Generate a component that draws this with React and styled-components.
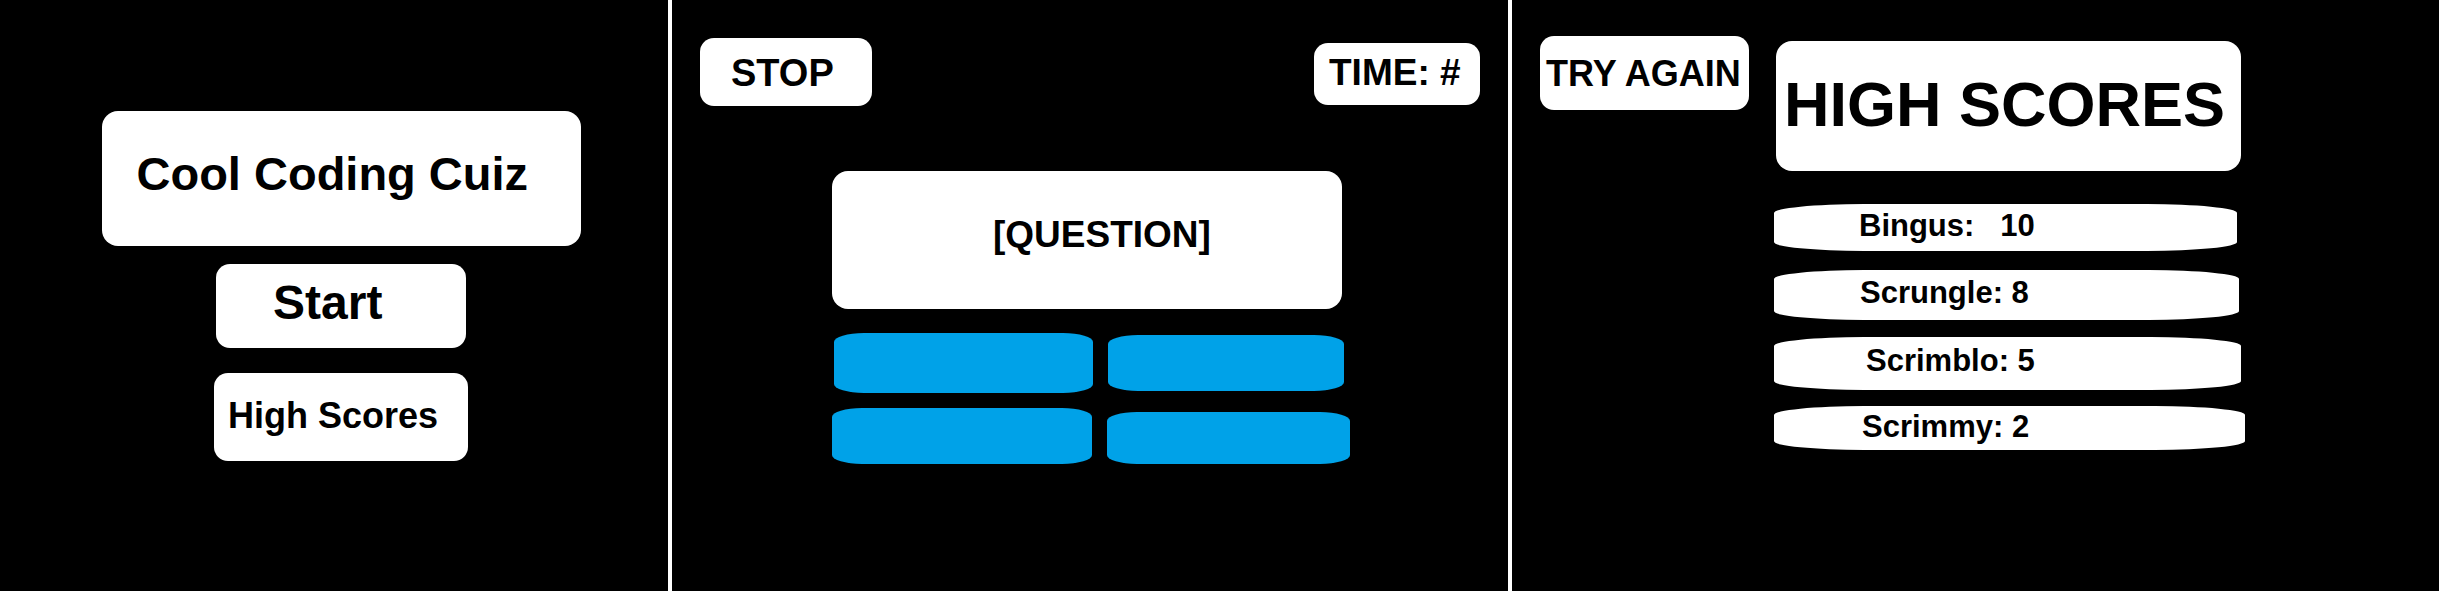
import React from "react";
import styled, { createGlobalStyle } from "styled-components";

const GlobalStyle = createGlobalStyle`
  html, body {
    margin: 0;
    padding: 0;
    background: #000;
  }
  body {
    font-family: "Liberation Sans", Arial, sans-serif;
    font-weight: bold;
    color: #000;
  }
`;

const Screens = styled.div`
  display: flex;
  width: 2439px;
  height: 591px;
  background: #000;
  overflow: hidden;
`;

const Panel = styled.section`
  box-sizing: border-box;
  width: ${(p) => p.$w}px;
  height: 100%;
  flex-shrink: 0;
  border-right: ${(p) => (p.$divider ? "4px solid #fff" : "none")};
  display: flex;
`;

const MenuColumn = styled.div`
  flex: 1;
  display: flex;
  flex-direction: column;
  align-items: center;
  padding: 111px 0 0 14px;
`;

const Card = styled.div`
  box-sizing: border-box;
  flex-shrink: 0;
  width: ${(p) => p.$w}px;
  height: ${(p) => p.$h}px;
  margin-top: ${(p) => p.$mt || 0}px;
  margin-left: ${(p) => p.$ml || 0}px;
  padding: ${(p) => p.$pt}px 0 0 ${(p) => p.$pl}px;
  background: #fff;
  border-radius: ${(p) => p.$r || 14}px;
  font-size: ${(p) => p.$size}px;
  line-height: 1;
  white-space: pre;
`;

const GameColumn = styled.div`
  flex: 1;
  display: flex;
  flex-direction: column;
  align-items: flex-start;
  padding: 38px 28px 0;
`;

const TopBar = styled.div`
  align-self: stretch;
  display: flex;
  justify-content: space-between;
  align-items: flex-start;
`;

const AnswerRow = styled.div`
  display: flex;
  align-items: flex-start;
  gap: 15px;
  margin-top: ${(p) => p.$mt}px;
  margin-left: 132px;
`;

const Answer = styled.button`
  flex-shrink: 0;
  width: ${(p) => p.$w}px;
  height: ${(p) => p.$h}px;
  margin-top: ${(p) => p.$mt || 0}px;
  margin-left: ${(p) => p.$ml || 0}px;
  padding: 0;
  border: none;
  background: #00a2e8;
  border-radius: 30px / 9px;
`;

const ScoresLayout = styled.div`
  flex: 1;
  display: flex;
  align-items: flex-start;
  gap: 25px;
  padding-left: 28px;
`;

const ScoreColumn = styled.div`
  display: flex;
  flex-direction: column;
  align-items: flex-start;
  margin-top: 41px;
`;

const ScoreRow = styled.div`
  box-sizing: border-box;
  width: ${(p) => p.$w}px;
  height: ${(p) => p.$h}px;
  margin-top: ${(p) => p.$mt}px;
  padding: ${(p) => p.$pt}px 0 0 ${(p) => p.$pl}px;
  background: #fff;
  border-radius: 90px / 9px;
  font-size: 31px;
  line-height: 1;
  white-space: pre;
`;

const answers = [
  [
    { w: 259, h: 60, ml: 2 },
    { w: 236, h: 56, mt: 2 },
  ],
  [
    { w: 260, h: 56 },
    { w: 243, h: 52, mt: 4 },
  ],
];

const scores = [
  { name: "Bingus:   10", w: 463, h: 47, mt: 33, pt: 6, pl: 85, ml: 2 },
  { name: "Scrungle: 8", w: 465, h: 50, mt: 19, pt: 7, pl: 86 },
  { name: "Scrimblo: 5", w: 467, h: 53, mt: 17, pt: 8, pl: 92 },
  { name: "Scrimmy: 2", w: 471, h: 44, mt: 16, pt: 5, pl: 88 },
];

const App = () => {
  return (
    <>
      <GlobalStyle />
      <Screens>
        <Panel $w={672} $divider>
          <MenuColumn>
            <Card $w={479} $h={135} $pt={150 - 111} $pl={35} $size={47} $r={16}>
              Cool Coding Cuiz
            </Card>
            <Card $w={250} $h={84} $mt={18} $pt={15} $pl={57} $size={48}>
              Start
            </Card>
            <Card $w={254} $h={88} $mt={25} $pt={25} $pl={14} $size={36}>
              High Scores
            </Card>
          </MenuColumn>
        </Panel>

        <Panel $w={840} $divider>
          <GameColumn>
            <TopBar>
              <Card $w={172} $h={68} $pt={16} $pl={31} $size={38}>
                STOP
              </Card>
              <Card $w={166} $h={62} $mt={5} $pt={11} $pl={15} $size={37}>
                TIME: #
              </Card>
            </TopBar>
            <Card $w={510} $h={138} $mt={65} $ml={132} $pt={45} $pl={161} $size={37} $r={16}>
              [QUESTION]
            </Card>
            {answers.map((row, i) => (
              <AnswerRow key={i} $mt={i === 0 ? 24 : 15}>
                {row.map((a, j) => (
                  <Answer key={j} $w={a.w} $h={a.h} $mt={a.mt} $ml={a.ml} />
                ))}
              </AnswerRow>
            ))}
          </GameColumn>
        </Panel>

        <Panel $w={927}>
          <ScoresLayout>
            <Card $w={209} $h={74} $mt={36} $pt={20} $pl={6} $size={36}>
              TRY AGAIN
            </Card>
            <ScoreColumn>
              <Card $w={465} $h={130} $ml={2} $pt={32} $pl={8} $size={63} $r={16}>
                HIGH SCORES
              </Card>
              {scores.map((s) => (
                <ScoreRow key={s.name} $w={s.w} $h={s.h} $mt={s.mt} $pt={s.pt} $pl={s.pl}>
                  {s.name}
                </ScoreRow>
              ))}
            </ScoreColumn>
          </ScoresLayout>
        </Panel>
      </Screens>
    </>
  );
};

export default App;
